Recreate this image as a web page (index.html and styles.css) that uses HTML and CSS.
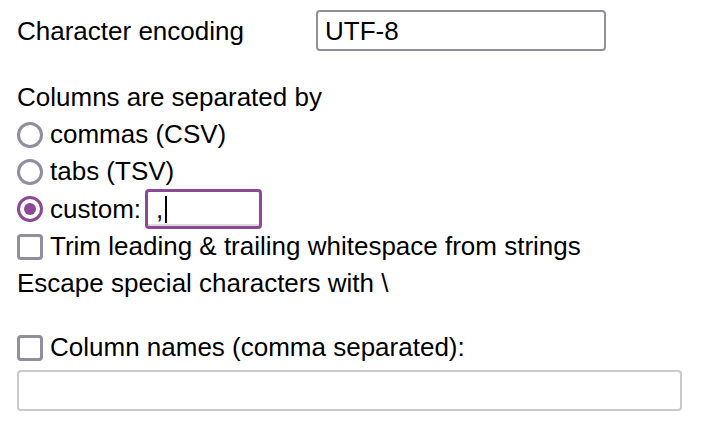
FILE: index.html
```html
<!DOCTYPE html>
<html lang="en">
<head>
<meta charset="utf-8">
<title>Import options</title>
<link rel="stylesheet" href="styles.css">
</head>
<body>
<form class="form">
  <div class="row-enc">
    <label class="enc-label" for="enc">Character encoding</label>
    <input class="text-input enc-input" id="enc" type="text" value="UTF-8">
  </div>

  <div class="rows">
    <div class="line">Columns are separated by</div>
    <label class="line"><span class="radio"></span>commas (CSV)</label>
    <label class="line"><span class="radio"></span>tabs (TSV)</label>
    <label class="line line-custom"><span class="radio checked"></span>custom:<span class="custom-input">,<span class="caret"></span></span></label>
    <label class="line"><span class="check"></span>Trim leading &amp; trailing whitespace from strings</label>
    <div class="line">Escape special characters with \</div>
  </div>

  <label class="line names-line"><span class="check"></span>Column names (comma separated):</label>
  <input class="text-input names-input" type="text" disabled>
</form>
</body>
</html>
```

FILE: styles.css
```css
html, body {
  margin: 0;
  padding: 0;
  background: #ffffff;
}

body {
  font-family: "Liberation Sans", Arial, sans-serif;
  font-size: 26px;
  color: #000000;
}

.form {
  display: flex;
  flex-direction: column;
  align-items: flex-start;
  padding: 10px 0 0 17px;
}

.row-enc {
  display: flex;
  align-items: center;
  height: 41px;
}

.enc-label {
  width: 299px;
  padding-top: 1px;
}

.text-input {
  box-sizing: border-box;
  font-family: inherit;
  font-size: 26px;
  color: #000000;
  background: #ffffff;
  border-radius: 4px;
  outline: none;
  margin: 0;
}

.enc-input {
  width: 290px;
  height: 41px;
  border: 2px solid #8f8f9d;
  padding: 2px 7px 0 7px;
}

.rows {
  display: flex;
  flex-direction: column;
  margin-top: 28px;
}

.line {
  display: flex;
  align-items: center;
  height: 37px;
  white-space: nowrap;
}

.line-custom {
  height: 38px;
}

.radio {
  box-sizing: border-box;
  width: 26px;
  height: 26px;
  border: 3px solid #8f8f9d;
  border-radius: 50%;
  margin-right: 7px;
  flex: none;
  display: flex;
  align-items: center;
  justify-content: center;
}

.radio.checked {
  border-color: #8c4a96;
}

.radio.checked::after {
  content: "";
  width: 12px;
  height: 12px;
  border-radius: 50%;
  background: #8c4a96;
}

.check {
  box-sizing: border-box;
  width: 26px;
  height: 26px;
  border: 3px solid #8f8f9d;
  border-radius: 4px;
  margin-right: 7px;
  flex: none;
}

.custom-input {
  box-sizing: border-box;
  display: flex;
  align-items: center;
  width: 117px;
  height: 40px;
  margin-left: 4px;
  padding: 0 0 0 8px;
  border: 3px solid #8c4a96;
  border-radius: 4px;
  box-shadow: inset 0 -2px 0 #dcdcdc;
  background: #ffffff;
}

.caret {
  display: inline-block;
  width: 2px;
  height: 27px;
  background: #000000;
  margin-left: 2px;
}

.names-line {
  margin-top: 27px;
}

.names-input {
  width: 665px;
  height: 41px;
  margin-top: 4px;
  border: 2px solid #c9c9ce;
  padding: 0 7px;
}
```
